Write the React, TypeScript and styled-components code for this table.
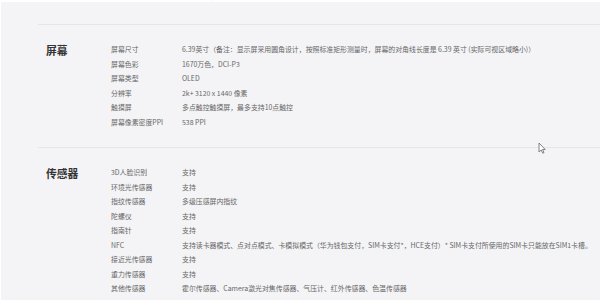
import React from 'react';
import styled, { createGlobalStyle } from 'styled-components';

type Spec = { label: string; value: string };

type Group = { title: string; specs: Spec[] };

const groups: Group[] = [
  {
    title: '屏幕',
    specs: [
      {
        label: '屏幕尺寸',
        value:
          '6.39英寸（备注：显示屏采用圆角设计，按照标准矩形测量时，屏幕的对角线长度是 6.39 英寸 (实际可视区域略小)）',
      },
      { label: '屏幕色彩', value: '1670万色，DCI-P3' },
      { label: '屏幕类型', value: 'OLED' },
      { label: '分辨率', value: '2k+ 3120 x 1440 像素' },
      { label: '触摸屏', value: '多点触控触摸屏，最多支持10点触控' },
      { label: '屏幕像素密度PPI', value: '538 PPI' },
    ],
  },
  {
    title: '传感器',
    specs: [
      { label: '3D人脸识别', value: '支持' },
      { label: '环境光传感器', value: '支持' },
      { label: '指纹传感器', value: '多级压感屏内指纹' },
      { label: '陀螺仪', value: '支持' },
      { label: '指南针', value: '支持' },
      {
        label: 'NFC',
        value:
          '支持读卡器模式、点对点模式、卡模拟模式（华为钱包支付，SIM卡支付*，HCE支付）* SIM卡支付所使用的SIM卡只能放在SIM1卡槽。',
      },
      { label: '接近光传感器', value: '支持' },
      { label: '重力传感器', value: '支持' },
      { label: '其他传感器', value: '霍尔传感器、Camera激光对焦传感器、气压计、红外传感器、色温传感器' },
    ],
  },
];

const GlobalStyle = createGlobalStyle`
  html, body {
    margin: 0;
    padding: 0;
    background: #f4f4f6;
  }
  body {
    font-family: "Noto Sans CJK SC", "Noto Sans", "Liberation Sans", sans-serif;
  }
`;

const Page = styled.div`
  position: relative;
  width: 600px;
  height: 300px;
  overflow: hidden;
  background: #f4f4f6;
  border-left: 1px solid #ffffff;
  box-sizing: border-box;
`;

const TopStrip = styled.div`
  height: 2px;
  overflow: hidden;
  background: #ffffff;
`;

const CutRow = styled.div`
  display: flex;
  margin-top: -9px;
  padding-left: 110px;
  font-size: 6.9px;
  line-height: 11px;
  color: #b8b8b8;
  white-space: nowrap;
`;

const CutLabel = styled.span`
  width: 71px;
`;

const Spacer = styled.div`
  height: 22px;
`;

const Section = styled.section`
  display: flex;
  margin-left: 37px;
  padding: 17px 0 18px 8px;
  border-top: 1px solid #e6e6e9;
`;

const Title = styled.h2`
  width: 65px;
  margin: 0;
  flex-shrink: 0;
  font-size: 10.8px;
  line-height: 17px;
  font-weight: 700;
  color: #333333;
`;

const SpecList = styled.dl`
  margin: 0;
  display: grid;
  grid-template-columns: 71px auto;
`;

const Label = styled.dt`
  font-size: 6.9px;
  line-height: 14.5px;
  color: #666666;
  white-space: nowrap;
`;

const Value = styled.dd`
  margin: 0;
  font-size: 6.9px;
  line-height: 14.5px;
  color: #666666;
  white-space: nowrap;
`;

const Cursor = styled.svg`
  position: absolute;
  left: 537px;
  top: 142px;
`;

function SpecGroup({ title, specs }: Group) {
  return (
    <Section>
      <Title>{title}</Title>
      <SpecList>
        {specs.map((s) => (
          <React.Fragment key={s.label}>
            <Label>{s.label}</Label>
            <Value>{s.value}</Value>
          </React.Fragment>
        ))}
      </SpecList>
    </Section>
  );
}

export default function App() {
  return (
    <>
      <GlobalStyle />
      <Page>
        <TopStrip>
          <CutRow>
            <CutLabel>机身颜色</CutLabel>
            <span>亮黑色、极光色、天空之境、翡冷翠、赤茶橘、罗兰紫</span>
          </CutRow>
        </TopStrip>
        <Spacer />
        {groups.map((g) => (
          <SpecGroup key={g.title} {...g} />
        ))}
        <Cursor width="8" height="12" viewBox="0 0 8 12">
          <path d="M1 1 L1 10 L3.2 8 L4.8 11.2 L6 10.6 L4.5 7.5 L7.2 7.5 Z" fill="#ffffff" stroke="#666666" strokeWidth="0.8" strokeLinejoin="round" />
        </Cursor>
      </Page>
    </>
  );
}
